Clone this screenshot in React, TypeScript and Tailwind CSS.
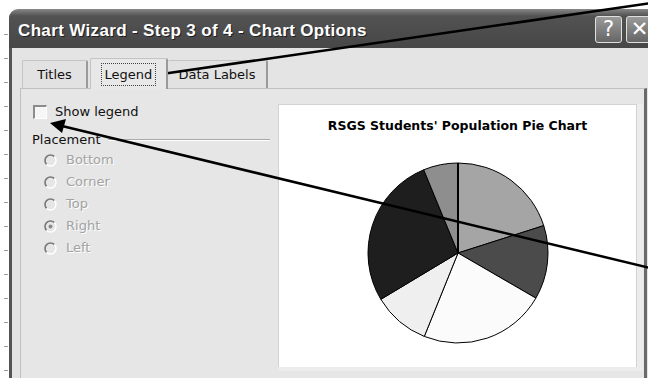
import React from "react";

// Pie slices, angles clockwise from 12 o'clock
const slices = [
  { from: 0, to: 72.3, fill: "#a5a5a5" },
  { from: 72.3, to: 120.1, fill: "#4b4b4b" },
  { from: 120.1, to: 202, fill: "#fbfbfb" },
  { from: 202, to: 239, fill: "#efefef" },
  { from: 239, to: 337.6, fill: "#1e1e1e" },
  { from: 337.6, to: 360, fill: "#8e8e8e" },
];

const placements = [
  { label: "Bottom", checked: false },
  { label: "Corner", checked: false },
  { label: "Top", checked: false },
  { label: "Right", checked: true },
  { label: "Left", checked: false },
];

const cx = 92;
const cy = 92;
const r = 90;

const point = (a: number) => {
  const rad = (a * Math.PI) / 180;
  return [cx + r * Math.sin(rad), cy - r * Math.cos(rad)];
};

const slicePath = (a0: number, a1: number) => {
  const [x0, y0] = point(a0);
  const [x1, y1] = point(a1);
  const large = a1 - a0 > 180 ? 1 : 0;
  return `M${cx} ${cy} L${x0} ${y0} A${r} ${r} 0 ${large} 1 ${x1} ${y1} Z`;
};

const Radio = ({ checked }: { checked: boolean }) => (
  <svg width="13" height="13" viewBox="0 0 13 13">
    <circle cx="6.5" cy="6.5" r="5.5" fill="#e6e6e6" />
    <path d="M10.4 2.6 A5.5 5.5 0 0 0 2.6 10.4" fill="none" stroke="#777" strokeWidth="1.6" />
    <path d="M2.6 10.4 A5.5 5.5 0 0 0 10.4 2.6" fill="none" stroke="#fff" strokeWidth="1.4" />
    {checked && <circle cx="6.5" cy="6.5" r="2" fill="#8a8a8a" />}
  </svg>
);

const TitleButton = ({ children }: { children: React.ReactNode }) => (
  <div className="w-[27px] h-[27px] rounded-[3px] border border-[#e0e0e0] bg-gradient-to-b from-[#9a9a9a] to-[#666] flex items-center justify-center text-white text-[21px] leading-none [font-family:'DejaVu_Sans',sans-serif]">
    {children}
  </div>
);

export default function App() {
  return (
    <div className="relative w-[648px] h-[378px] overflow-hidden bg-white flex items-start [font-family:'DejaVu_Sans',sans-serif]">
      {/* ruler ticks in the left margin */}
      <div className="w-[9px] shrink-0 flex flex-col items-end gap-[23px] pt-[34px] pr-[1px]">
        {Array.from({ length: 15 }).map((_, i) => (
          <div key={i} className="w-[4px] h-px bg-[#9a9a9a]" />
        ))}
      </div>

      <div className="mt-[9px] w-[649px] h-[400px] shrink-0 flex flex-col">
        {/* title bar */}
        <div className="h-[39px] shrink-0 rounded-tl-[9px] bg-gradient-to-b from-[#888] via-[#525252] via-[18%] to-[#474747] flex items-start pl-[9px] pr-[5px]">
          <span className="mt-[12px] text-[17px] leading-[20px] font-bold tracking-[0.35px] text-white [font-family:'Liberation_Sans',sans-serif] [text-shadow:1px_1px_0_#1e1e1e]">
            Chart Wizard - Step 3 of 4 - Chart Options
          </span>
          <div className="ml-auto mt-[7px] flex gap-[4px]">
            <TitleButton>?</TitleButton>
            <TitleButton>✕</TitleButton>
          </div>
        </div>

        {/* body */}
        <div className="flex-1 bg-[#e4e4e4] border-l-[3px] border-[#545454] pl-[8px] pt-[12px]">
          {/* tabs */}
          <div className="h-[28px] flex items-end pl-[2px] text-[13px] text-[#111]">
            <div className="w-[66px] h-[28px] border-t border-l border-r-2 border-[#c4c4c4] border-r-[#9a9a9a] rounded-t-[2px] bg-[#e2e2e2] flex items-center justify-center">
              Titles
            </div>
            <div className="ml-[2px] w-[78px] h-[31px] -mb-px relative z-10 border-t border-l border-r-2 border-[#c4c4c4] border-r-[#9a9a9a] rounded-t-[2px] bg-[#e8e8e8] flex items-center justify-center">
              <span className="px-[3px] leading-[21px] border border-dotted border-[#444]">Legend</span>
            </div>
            <div className="w-[100px] h-[28px] border-t border-r-2 border-[#c4c4c4] border-r-[#9a9a9a] rounded-t-[2px] bg-[#e2e2e2] flex items-center justify-center">
              Data Labels
            </div>
          </div>

          {/* tab panel */}
          <div className="w-[627px] h-[300px] border-t border-l border-[#c0c0c0] border-r-[3px] border-r-[#6a6a6a] bg-[#e6e6e6] flex">
            <div className="w-[257px] shrink-0 pl-[12px] pt-[15px] text-[13px]">
              <div className="h-[16px] flex items-center gap-[8px] text-[#111]">
                <div className="w-[14px] h-[14px] bg-[#f6f6f6] border-t-2 border-l-2 border-[#8c8c8c] border-r border-b border-r-white border-b-white" />
                <span>Show legend</span>
              </div>
              <div className="mt-[11px] h-[18px] flex items-center text-[#111]">
                <span className="-ml-[1px]">Placement</span>
                <div className="ml-[7px] mr-[8px] flex-1 h-[2px] border-t border-[#a8a8a8] border-b border-b-white" />
              </div>
              <div className="pl-[11px] flex flex-col">
                {placements.map((p) => (
                  <div key={p.label} className="h-[22px] flex items-center gap-[9px] text-[#a3a3a3] [text-shadow:1px_1px_0_#fff]">
                    <Radio checked={p.checked} />
                    <span>{p.label}</span>
                  </div>
                ))}
              </div>
            </div>

            {/* chart preview */}
            <div className="mt-[15px] h-[267px] p-px bg-[#d2d2d2] border-b-[4px] border-r-[6px] border-[#ececec]">
              <div className="w-[357px] h-[262px] bg-white flex flex-col items-center">
                <div className="pt-[14px] text-[12.5px] leading-[14px] font-bold text-black">
                  RSGS Students' Population Pie Chart
                </div>
                <svg className="mt-[28px]" width="184" height="184" viewBox="0 0 184 184">
                  {slices.map((s) => (
                    <path key={s.from} d={slicePath(s.from, s.to)} fill={s.fill} stroke="#000" strokeWidth="1" strokeLinejoin="round" />
                  ))}
                  <line x1={cx} y1={cy} x2={cx} y2={cy - r} stroke="#000" strokeWidth="2" />
                </svg>
              </div>
            </div>
          </div>
        </div>
      </div>

      {/* annotation arrows */}
      <svg className="absolute inset-0 pointer-events-none" width="648" height="378" viewBox="0 0 648 378">
        <line x1="652" y1="3" x2="162" y2="74" stroke="#000" strokeWidth="2.5" />
        <polygon points="150,76 165,67 167,81" fill="#000" />
        <line x1="650" y1="268" x2="62" y2="126" stroke="#000" strokeWidth="2.5" />
        <polygon points="50,123 66,119 62,133" fill="#000" />
      </svg>
    </div>
  );
}
